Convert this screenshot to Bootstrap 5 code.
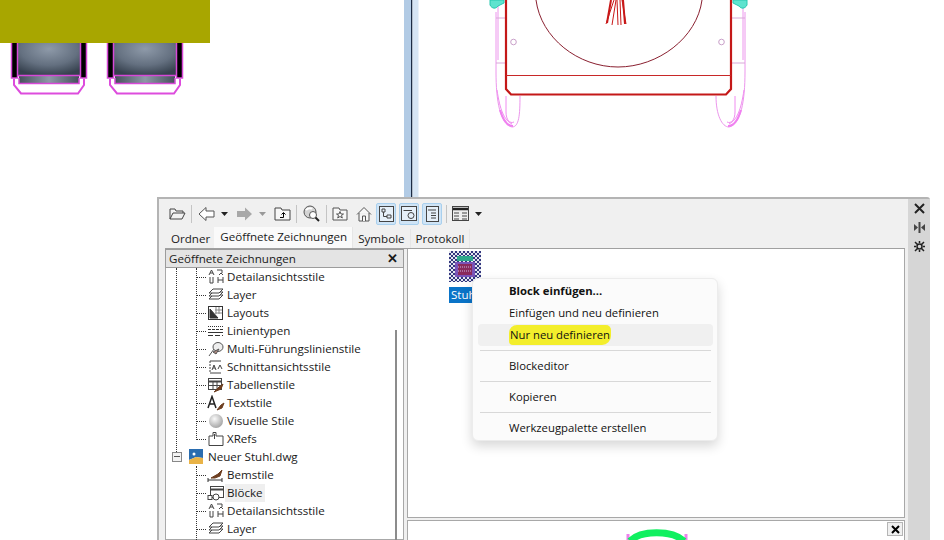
<!DOCTYPE html>
<html lang="de"><head><meta charset="utf-8"><title>DesignCenter</title>
<link href="https://cdn.jsdelivr.net/npm/bootstrap@5.3.0/dist/css/bootstrap.min.css" rel="stylesheet">
<style>
html,body{margin:0;height:540px;overflow:hidden;background:#fff}
body{font-family:"Open Sans","Liberation Sans",sans-serif;font-size:11.6px;color:#1a1a1a}
.stage{position:relative;width:944px;height:540px;overflow:hidden}
.cad{position:absolute;left:0;top:0}
.palette{position:absolute;left:157px;top:197px;width:773px;height:343px;background:#f0f0f0;border:2px solid #b4b4b4;border-bottom:0;border-right:0;border-top-right-radius:3px}
.pal-main{width:749px;padding:1px 3px 0 6px}
.pal-side{width:22px;background:#d6d6d6;align-items:center;padding-top:4px;gap:8px}
.tools{height:27px;gap:6px;padding-left:4px}
.tools svg{display:block;flex:none}
.tsep{width:1px;height:18px;background:#c4c4c4;flex:none}
.tact{background:#cfe4f6;border:1px solid #a9d0ee;border-radius:2px;height:22px;width:20px;display:flex;align-items:center;justify-content:center;flex:none}
.nudge-p1{margin-left:1px}.nudge-p2{margin-left:2px}.nudge-n1{margin-left:-1px}.nudge-n2{margin-left:-2px}.nudge-n3{margin-left:-3px}
.tabrow{height:21px;align-items:flex-end;padding-left:1px}
.tabi{height:19px;padding:0 5px;line-height:19px;white-space:nowrap;background:#f0f0f0;border-right:1px solid #e6e6e6}
.tabi.on{height:21px;line-height:19px;background:#fafafa;padding:0 5px 0 6px;margin-left:-2px;position:relative}
.panes{height:292px;gap:3px;border-top:1px solid #a0a0a0}
.treep{width:239px;flex:none;background:#fff;border:1px solid #a8a8a8;border-top:0;position:relative}
.treeh{height:19px;line-height:18px;background:#e4e4e4;border:1px solid #9c9c9c;padding:0 4px 0 3px;justify-content:space-between;margin:0 0 0 -1px;width:239px}
.treeh b{font-weight:700;font-size:13px;line-height:16px;padding-right:1px}
.trow{height:18px;line-height:18px;padding-left:41px;gap:0;white-space:nowrap;position:relative;display:flex;align-items:center}
.trow::before{content:"";position:absolute;left:30px;top:9px;width:10px;border-top:1px dotted #333}
.trow.top{padding-left:22px;gap:2px}
.trow.top::before{display:none}
.trow svg{flex:none}
.trow .lab{padding:0 2px}
.trow .sel{background:#efefef}
.vline{position:absolute;border-left:1px dotted #333}
.v-a{left:10px;top:19px;height:184px}.v-b{left:30px;top:19px;height:170px}.v-c{left:30px;top:217px;height:80px}
.minus{position:absolute;left:6px;top:203px;width:10px;height:10px;border:1px solid #888;background:#f4f4f4}
.minus::after{content:"";position:absolute;left:1px;right:1px;top:3px;border-top:1px solid #555}
.sbar{position:absolute;left:229px;top:81px;width:2px;height:220px;background:#8c8c8c}
.rightc{flex:1;gap:2px;min-width:0}
.rtop{height:269px;background:#fff;border:1px solid #a8a8a8;border-top:0;position:relative}
.rbot{flex:1;background:#fff;border:1px solid #a8a8a8;border-bottom:0;position:relative;overflow:hidden}
.thumb{position:absolute;left:41px;top:2px;width:32px;height:31px;background:repeating-conic-gradient(#33377e 0 25%,#e4e7f0 0 50%) 0 0/4px 4px}
.thumbin{position:absolute;left:5px;top:4px;width:22px;height:24px}
.stul{position:absolute;left:41px;top:38px;background:#0a74c8;color:#fff;height:16px;line-height:16px;padding:0 2px;white-space:nowrap}
.xbtn{position:absolute;right:1px;top:1px;width:16px;height:14px;background:#f0f0f0;border:1px solid #b5b5b5;display:flex;align-items:center;justify-content:center}
.arcpic{position:absolute;left:217px;top:7px}
.ctx{position:absolute;left:472px;top:278px;width:246px;height:163px;background:#fbfbfb;border:1px solid #ececec;border-radius:6px;box-shadow:0 5px 12px rgba(0,0,0,.16);padding:1px 4px 0 5px;font-size:11.3px;color:#111}
.citem{height:22px;line-height:22px;padding-left:31px;white-space:nowrap;border-radius:4px}
.citem.first{font-weight:700}
.citem.hot{background:#f0f0f0}
.citem .mk{background:#f3ee2c;border-radius:8px 5px 9px 4px;padding:2px 1px 3px 1px}
.chr{border-top:1px solid #d8d8d8;margin:4px 2px;opacity:1}
</style></head><body>
<div class="stage">
<svg class="cad" width="944" height="210" viewBox="0 0 944 210" fill="none" aria-hidden="true">
<defs>
<radialGradient id="g1" cx=".5" cy=".25" r=".75"><stop offset="0" stop-color="#8e9aa9"/><stop offset=".6" stop-color="#647080"/><stop offset="1" stop-color="#36414e"/></radialGradient>
<linearGradient id="g2" x1="0" x2="1" y1="0" y2="0"><stop offset="0" stop-color="#46505c"/><stop offset=".5" stop-color="#8d98a6"/><stop offset="1" stop-color="#46505c"/></linearGradient>
<g id="wheel">
<rect x="17" y="40" width="64" height="36" fill="url(#g1)"/>
<rect x="11" y="40" width="6" height="38" fill="#000"/>
<rect x="81" y="40" width="6" height="38" fill="#000"/>
<rect x="19" y="76" width="60" height="7" fill="url(#g2)"/>
<path d="M11.500 40V78H18M86.500 40V78H80M17.500 40V78M80.500 40V78" stroke="#d848d8" stroke-width="1.500"/>
<path d="M18 75.500H80M19 78V83.500H79V78" stroke="#d848d8" stroke-width="1.500"/>
<path d="M14 79V85L21 93.500H78L84 85V79" stroke="#dd4cdd" stroke-width="2"/>
</g>
</defs>
<use href="#wheel"/>
<use href="#wheel" x="96"/>
<rect x="0" y="0" width="210" height="43" fill="#a8a600"/>
<rect x="404" y="0" width="7" height="198" fill="#b2cbe5"/>
<rect x="411" y="0" width="1.500" height="198" fill="#1c2c44"/>
<rect x="412.500" y="0" width="6" height="198" fill="#d6e5f4"/>
<path d="M498 0V60M496 12V72C496 100 500 125 512 127C519 127 520 115 520 96" stroke="#ec96ec"/>
<path d="M506 96V112C506 120 510 124 514 122M497 90C500 110 504 120 512 124" stroke="#f08cf0"/>
<path d="M500 110C503 120 508 126 513 126" stroke="#f080f0" stroke-width="2"/>
<path d="M743 0V60M745 12V72C745 100 741 125 729 127C722 127 716 115 716 96" stroke="#ec96ec"/>
<path d="M735 96V112C735 120 731 124 727 122M744 90C741 110 737 120 729 124" stroke="#f08cf0"/>
<path d="M741 110C738 120 733 126 728 126" stroke="#f080f0" stroke-width="2"/>
<path d="M496 18H506M496 63H506M732 18H745M732 63H745" stroke="#d9a8d9"/>
<path d="M490 0V5C492 9 496 9 498 6L504 3V0ZM747 0V5C745 9 741 9 739 6L733 3V0Z" fill="#5fe3cf" stroke="#28c8b0"/>
<path d="M506 0V89L511 94.500H726L731 89V0" stroke="#c41818" stroke-width="2.200"/>
<path d="M506 75.500H731" stroke="#c82828"/>
<path d="M536 0C541 38 578 67 618 67C658 67 697 38 702 0" stroke="#8a2030"/>
<path d="M614 0L606 24M616 0L612 25M620 0L621 25M622 0L626 24M617 0L618 25" stroke="#c81818"/>
<path d="M611 0L607 23M623 0L625 24" stroke="#c81818" stroke-width="2"/>
<circle cx="513.500" cy="42" r="2.800" stroke="#c9a0c9"/>
<circle cx="721.500" cy="42" r="2.800" stroke="#c9a0c9"/>
</svg>

<div class="palette d-flex">
 <div class="pal-main">
  <div class="tools d-flex align-items-center">
   <svg width="17" height="14" viewBox="0 0 17 14" fill="none" stroke="#444"><path d="M1 12V2H6L7 4H14V6M1 12L4 6H16L13 12Z" fill="#f2f2f2"/></svg>
   <span class="tsep nudge-n1"></span>
   <svg width="17" height="16" viewBox="0 0 17 16" fill="#fff" stroke="#555"><path d="M1 8L8 1.500V5H16V11H8V14.500Z"/></svg>
   <svg width="8" height="14" viewBox="0 0 8 14" fill="#222"><path d="M0 5H7L3.500 9Z"/></svg>
   <svg class="nudge-p1" width="17" height="16" viewBox="0 0 17 16" fill="#a8a8a8"><path d="M16 8L9 1.500V5H1V11H9V14.500Z"/></svg>
   <svg width="8" height="14" viewBox="0 0 8 14" fill="#999"><path d="M0 5H7L3.500 9Z"/></svg>
   <svg class="nudge-p1" width="17" height="15" viewBox="0 0 17 15" fill="#f7f7f7" stroke="#444"><path d="M1 14V2H7L8 4H16V14Z"/><path d="M9.500 11.500V7M7.500 8.500L9.500 6.500L11.500 8.500M6 11.500H9.500" stroke="#000"/></svg>
   <span class="tsep nudge-n1"></span>
   <svg width="17" height="17" viewBox="0 0 17 17" fill="none" stroke="#555"><circle cx="7" cy="7" r="6" fill="#d4d4d4"/><path d="M3 5C5 3 8 3 9 4" stroke="#fff" stroke-width="2"/><circle cx="10" cy="10" r="3.500" fill="#fff"/><path d="M12.500 12.500L16 16" stroke-width="2" stroke="#222"/></svg>
   <span class="tsep"></span>
   <svg class="nudge-n1" width="16" height="15" viewBox="0 0 16 15" fill="#f7f7f7" stroke="#555"><path d="M1 14V2H7L8 4H15V14Z"/><path d="M8 5.500L9 8H11.500L9.500 9.500L10.300 12L8 10.500L5.700 12L6.500 9.500L4.500 8H7Z"/></svg>
   <svg class="nudge-p2" width="16" height="16" viewBox="0 0 16 16" fill="#f7f7f7" stroke="#555"><path d="M1 8.500L8 1.500L15 8.500M3 7V15H13V7"/><path d="M6.500 15V10H9.500V15"/></svg>
   <span class="tact nudge-n2"><svg width="15" height="16" viewBox="0 0 15 16" fill="#e6f0f9" stroke="#444"><rect x=".5" y=".5" width="14" height="15"/><path d="M3 3H6V6H3ZM8 9H12V12H8ZM4.500 6V10.500H8" /></svg></span>
   <span class="tact nudge-n3"><svg width="16" height="15" viewBox="0 0 16 15" fill="#e6f0f9" stroke="#444"><rect x=".5" y=".5" width="15" height="14"/><path d="M2.500 4.500H11" /><circle cx="10" cy="9.500" r="3"/></svg></span>
   <span class="tact nudge-n3"><svg width="13" height="16" viewBox="0 0 13 16" fill="#e6f0f9" stroke="#444"><rect x=".5" y=".5" width="12" height="15"/><path d="M2 4H10M5 7H10M5 9.500H10M5 12H10"/></svg></span>
   <span class="tsep nudge-n2"></span>
   <svg class="nudge-n1" width="17" height="15" viewBox="0 0 17 15" fill="#eee" stroke="#444"><rect x=".5" y=".5" width="16" height="14"/><path d="M1 3H16" stroke="#222" stroke-width="2.500"/><path d="M2 7H7M10 7H15M2 10H7M10 10H15M2 13H7M10 13H15"/></svg>
   <svg width="8" height="14" viewBox="0 0 8 14" fill="#222"><path d="M0 5H7L3.500 9Z"/></svg>
  </div>
  <div class="tabrow d-flex">
   <div class="tabi">Ordner</div><div class="tabi on">Geöffnete Zeichnungen</div><div class="tabi">Symbole</div><div class="tabi">Protokoll</div>
  </div>
  <div class="panes d-flex">
   <div class="treep">
    <div class="treeh d-flex"><span>Geöffnete Zeichnungen</span><b>✕</b></div>
    <span class="vline v-a"></span>
    <span class="vline v-b"></span>
    <span class="vline v-c"></span>
    <div class="trow"><svg width="18" height="16" viewBox="0 0 18 16" fill="none" stroke="#444"><path d="M2 6L4.500 1L7 6M3 4H6"/><path d="M10 1H15V4M12 6L14 4L16 6"/><path d="M3 8V14H6V8M11 8V14M16 8V14M11 11H16"/></svg><span class="lab">Detailansichtsstile</span></div>
    <div class="trow"><svg width="18" height="16" viewBox="0 0 18 16" fill="#fff" stroke="#444"><path d="M2 12L6 8H16L12 12Z"/><path d="M2 9L6 5H16L12 9Z"/><path d="M2 6L6 2H16L12 6Z"/></svg><span class="lab">Layer</span></div>
    <div class="trow"><svg width="18" height="16" viewBox="0 0 18 16" fill="#fff" stroke="#333"><rect x="1.500" y="1.500" width="14" height="13"/><path d="M3 13L3 4L11 13Z" fill="#333"/><path d="M9 2V9M12 2V9M8 5H15M8 8H15" stroke="#888"/></svg><span class="lab">Layouts</span></div>
    <div class="trow"><svg width="18" height="16" viewBox="0 0 18 16" fill="none" stroke="#333"><path d="M1 3.500H16" stroke-dasharray="1 1"/><path d="M1 6.500H16" stroke-dasharray="3 1"/><path d="M1 9.500H16"/><path d="M1 12.500H16" stroke-dasharray="5 2"/></svg><span class="lab">Linientypen</span></div>
    <div class="trow"><svg width="18" height="16" viewBox="0 0 18 16" fill="#ddd" stroke="#555"><path d="M2 15L7 8" fill="none"/><ellipse cx="11" cy="6" rx="5" ry="4.500" fill="#eee"/><path d="M6 11L12 8L9 13Z" fill="#b08a80"/></svg><span class="lab">Multi-Führungslinienstile</span></div>
    <div class="trow"><svg width="18" height="16" viewBox="0 0 18 16" fill="none" stroke="#444"><path d="M3 2H14"/><path d="M3 14H14"/><path d="M3 2V14" stroke-dasharray="2 1"/><path d="M5 11L7 6L9 11M6 9H8M11 10L13 6L15 10"/></svg><span class="lab">Schnittansichtsstile</span></div>
    <div class="trow"><svg width="18" height="16" viewBox="0 0 18 16" fill="#fff" stroke="#444"><rect x="1.500" y="1.500" width="13" height="11"/><path d="M1.500 4.500H14.500" stroke-width="2"/><path d="M6 5V12M10 5V12M2 8.500H14"/><path d="M7 15L12 10L16 7L14 12Z" fill="#6d3e20" stroke="#6d3e20"/></svg><span class="lab">Tabellenstile</span></div>
    <div class="trow"><svg width="18" height="16" viewBox="0 0 18 16" fill="none" stroke="#222"><path d="M1 13L5 1.500L9 13M3 9H7" stroke-width="1.500"/><path d="M10 15L14 10L17 8L15 13Z" fill="#6d3e20" stroke="#6d3e20"/></svg><span class="lab">Textstile</span></div>
    <div class="trow"><svg width="18" height="16" viewBox="0 0 18 16"><defs><radialGradient id="ball" cx=".4" cy=".35" r=".7"><stop offset="0" stop-color="#fafafa"/><stop offset="1" stop-color="#a0a0a0"/></radialGradient></defs><circle cx="9" cy="8" r="7" fill="url(#ball)"/></svg><span class="lab">Visuelle Stile</span></div>
    <div class="trow"><svg width="18" height="16" viewBox="0 0 18 16" fill="#fff" stroke="#444"><path d="M2 14.500V5H6V1.500H9V5H16V14.500Z"/><path d="M7.500 3V8"/></svg><span class="lab">XRefs</span></div>
    <div class="trow top"><svg width="16" height="18" viewBox="0 0 16 18"><rect x="1" y="1" width="14" height="16" fill="#fff"/><path d="M1 1H15V10L8 9L1 12Z" fill="#2a6db0"/><path d="M1 12L8 9L15 10V16H1Z" fill="#e9b347"/><circle cx="6" cy="6" r="1.500" fill="#fff"/></svg><span class="lab">Neuer Stuhl.dwg</span></div>
    <div class="trow"><svg width="18" height="16" viewBox="0 0 18 16" fill="none" stroke="#333"><path d="M1 11V15M1 13H15M15 11V15"/><path d="M4 11L11 7L15 3L13 9L8 11Z" fill="#6d3e20" stroke="#6d3e20"/></svg><span class="lab">Bemstile</span></div>
    <div class="trow"><svg width="18" height="16" viewBox="0 0 18 16" fill="#fff" stroke="#444"><rect x="3.500" y="1.500" width="13" height="11"/><path d="M3.500 4.500H16.500" stroke-width="2"/><rect x="1" y="10.500" width="4" height="4"/><circle cx="9" cy="12" r="3"/></svg><span class="lab sel">Blöcke</span></div>
    <div class="trow"><svg width="18" height="16" viewBox="0 0 18 16" fill="none" stroke="#444"><path d="M2 6L4.500 1L7 6M3 4H6"/><path d="M10 1H15V4M12 6L14 4L16 6"/><path d="M3 8V14H6V8M11 8V14M16 8V14M11 11H16"/></svg><span class="lab">Detailansichtsstile</span></div>
    <div class="trow"><svg width="18" height="16" viewBox="0 0 18 16" fill="#fff" stroke="#444"><path d="M2 12L6 8H16L12 12Z"/><path d="M2 9L6 5H16L12 9Z"/><path d="M2 6L6 2H16L12 6Z"/></svg><span class="lab">Layer</span></div>
    <span class="minus"></span>
    <span class="sbar"></span>
   </div>
   <div class="rightc d-flex flex-column">
    <div class="rtop">
     <div class="thumb"><svg class="thumbin" viewBox="0 0 22 24"><rect x="3" y="1" width="16" height="5" fill="#2fa88c"/><rect x="1" y="7" width="20" height="15" fill="#7a54b8"/><rect x="4" y="9" width="14" height="11" fill="#8a2a5c"/><path d="M4 12H18M4 16H18" stroke="#c8b8e0" stroke-dasharray="1 1"/></svg></div>
     <div class="stul">Stuhl</div>
    </div>
    <div class="rbot">
     <svg class="arcpic" width="100" height="20" viewBox="0 0 100 20" fill="none" aria-hidden="true"><path d="M3 6V20M61 6V20" stroke="#ec82ec" stroke-width="3"/><path d="M5 13C16 2 47 2 59 13" stroke="#10f060" stroke-width="7"/></svg>
     <span class="xbtn"><svg width="9" height="9" viewBox="0 0 9 9" stroke="#000" stroke-width="2"><path d="M1 1L8 8M8 1L1 8"/></svg></span>
    </div>
   </div>
  </div>
 </div>
 <div class="pal-side d-flex flex-column">
  <svg width="11" height="11" viewBox="0 0 11 11" stroke="#222" stroke-width="2"><path d="M1 1L10 10M10 1L1 10"/></svg>
  <svg width="11" height="11" viewBox="0 0 11 11" fill="#444"><rect x="4.500" y="0" width="2" height="11"/><path d="M0 2L4 5.500L0 9Z"/><path d="M11 2V9L7 5.500Z"/></svg>
  <svg width="11" height="11" viewBox="0 0 11 11" stroke="#222" fill="none" stroke-width="1.500"><circle cx="5.500" cy="5.500" r="2.500"/><path d="M1 1L3.500 3.500M10 1L7.500 3.500M1 10L3.500 7.500M10 10L7.500 7.500M5.500 0V2M5.500 9V11M0 5.500H2M9 5.500H11"/></svg>
 </div>
</div>

<div class="ctx">
 <div class="citem first">Block einfügen...</div>
 <div class="citem">Einfügen und neu definieren</div>
 <div class="citem hot"><span class="mk">Nur neu definieren</span></div>
 <hr class="chr">
 <div class="citem">Blockeditor</div>
 <hr class="chr">
 <div class="citem">Kopieren</div>
 <hr class="chr">
 <div class="citem">Werkzeugpalette erstellen</div>
</div>
</div>
</body></html>
